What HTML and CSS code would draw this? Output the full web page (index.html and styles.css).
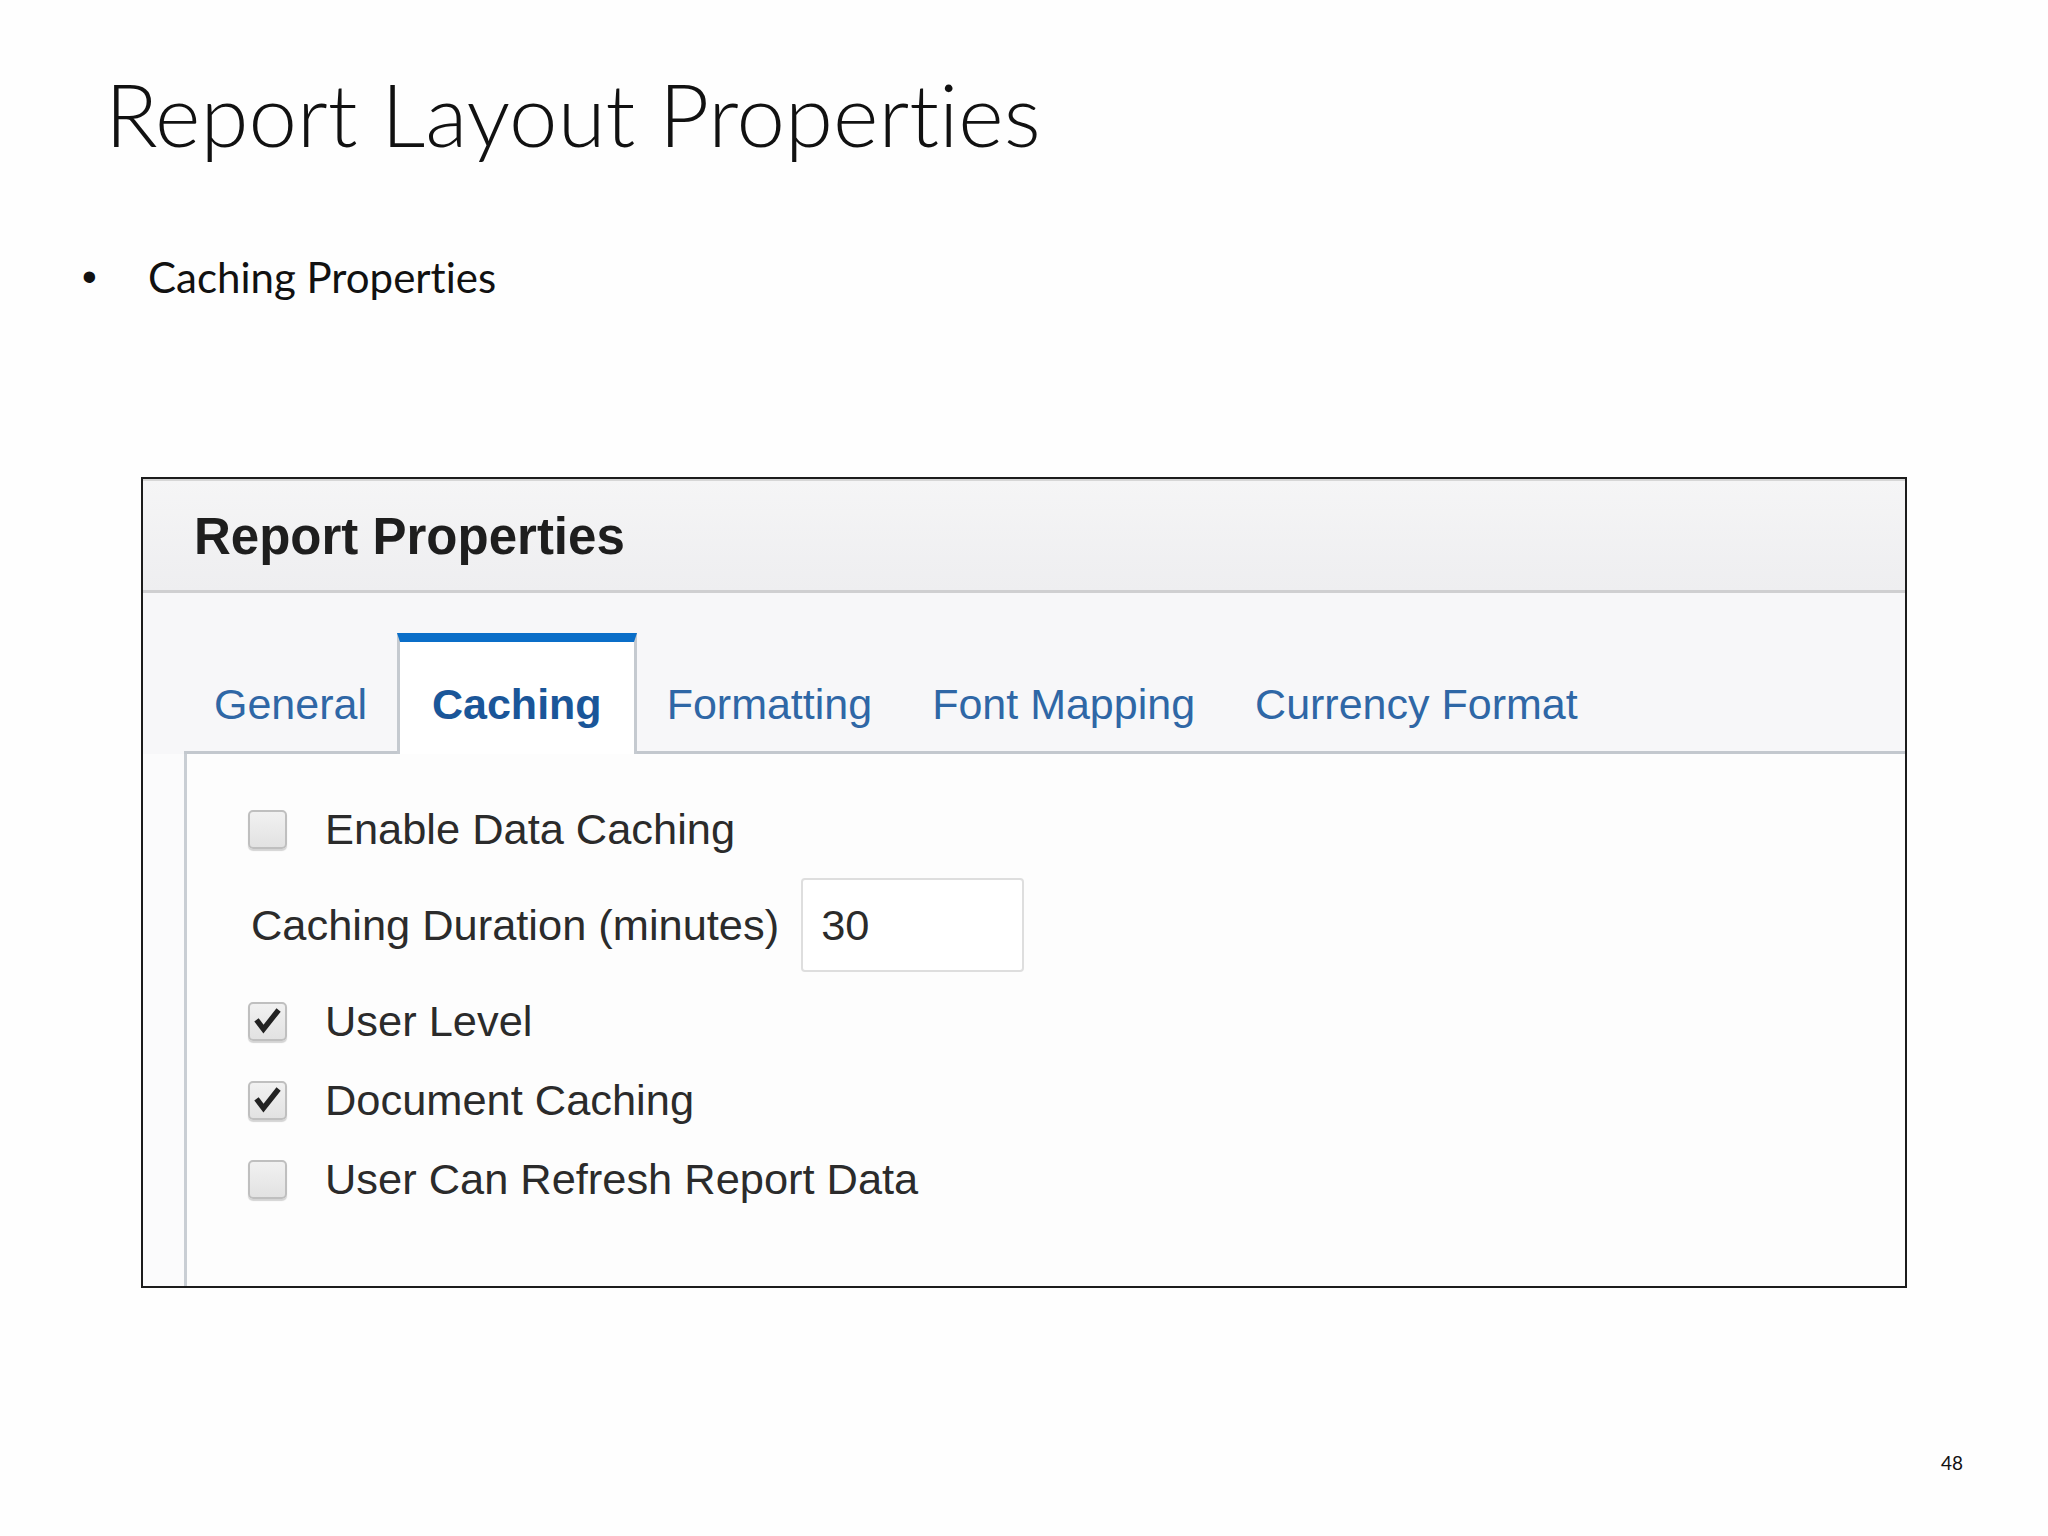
FILE: index.html
```html
<!DOCTYPE html>
<html>
<head>
<meta charset="utf-8">
<link rel="stylesheet" href="styles.css">
</head>
<body>
<div class="slide">
  <h1 class="title">Report Layout Properties</h1>
  <ul class="bullets">
    <li><span class="dot">•</span><span>Caching Properties</span></li>
  </ul>
  <div class="panel">
    <div class="panel-head">Report Properties</div>
    <div class="tabarea">
      <div class="tabs">
        <div class="tab">General</div>
        <div class="tab active">Caching</div>
        <div class="tab">Formatting</div>
        <div class="tab">Font Mapping</div>
        <div class="tab">Currency Format</div>
      </div>
    </div>
    <div class="lower">
      <div class="content">
        <div class="row">
          <span class="cb"></span><span class="label">Enable Data Caching</span>
        </div>
        <div class="row field">
          <span class="label">Caching Duration (minutes)</span>
          <span class="input">30</span>
        </div>
        <div class="row">
          <span class="cb"><svg viewBox="0 0 39 39"><path d="M9 20 L15 28 L30 9" /></svg></span><span class="label">User Level</span>
        </div>
        <div class="row">
          <span class="cb"><svg viewBox="0 0 39 39"><path d="M9 20 L15 28 L30 9" /></svg></span><span class="label">Document Caching</span>
        </div>
        <div class="row">
          <span class="cb"></span><span class="label">User Can Refresh Report Data</span>
        </div>
      </div>
    </div>
  </div>
  <div class="footer">48</div>
</div>
</body>
</html>
```

FILE: styles.css
```css
html, body {
  margin: 0;
  padding: 0;
  background: #ffffff;
}
.slide {
  width: 2048px;
  height: 1536px;
  display: flex;
  flex-direction: column;
  background: #fefefe;
  font-family: Lato, "Open Sans", sans-serif;
  font-variant-ligatures: none;
  color: #000;
}
.title {
  margin: 0;
  padding: 64px 0 0 105px;
  font-family: Lato, "Open Sans", sans-serif;
  font-weight: 300;
  font-size: 87px;
  line-height: 100px;
  color: #111;
}
.bullets {
  list-style: none;
  margin: 88px 0 0 0;
  padding: 0 0 0 82px;
  font-size: 42px;
  line-height: 50px;
  color: #111;
}
.bullets li {
  display: flex;
}
.dot {
  width: 66px;
  font-family: "Liberation Sans", sans-serif;
  font-size: 42px;
}
.panel {
  margin: 175px 0 0 141px;
  width: 1766px;
  height: 811px;
  box-sizing: border-box;
  border: 2px solid #1c1c1c;
  box-shadow: inset 5px 0 0 #c9cdd3;
  display: flex;
  flex-direction: column;
  font-family: "Liberation Sans", Arial, sans-serif;
  background: #fdfdfd;
}
.panel-head {
  height: 114px;
  box-sizing: border-box;
  padding: 26px 0 0 51px;
  font-weight: bold;
  font-size: 51px;
  line-height: 60px;
  color: #1e1e1e;
  background: linear-gradient(#f5f5f6, #eeeef0);
  border-top: 2px solid #d6d6d6;
  border-bottom: 3px solid #cfcfd1;
}
.tabarea {
  height: 161px;
  box-sizing: border-box;
  background: #f7f7f9;
  padding-left: 41px;
  display: flex;
  align-items: flex-end;
}
.tabs {
  flex: 1;
  display: flex;
  align-items: flex-end;
  border-bottom: 3px solid #c3c8ce;
}
.tab {
  padding: 0 30px 22px;
  font-size: 43px;
  line-height: 50px;
  color: #2f67a6;
  white-space: nowrap;
}
.tab.active {
  background: #ffffff;
  border: 3px solid #c5cad0;
  border-top: 9px solid #0a6ec8;
  border-bottom: none;
  padding: 37px 32px 25px;
  margin-bottom: -3px;
  font-weight: bold;
  color: #1a5699;
}
.lower {
  flex: 1;
  display: flex;
  padding-left: 41px;
  background: #fbfbfc;
}
.content {
  flex: 1;
  border-left: 3px solid #c9ced4;
  background: #fdfdfd;
  padding: 45px 0 0 61px;
  display: flex;
  flex-direction: column;
  gap: 19px;
}
.row {
  display: flex;
  align-items: center;
  height: 60px;
  font-size: 43.4px;
  line-height: 50px;
  color: #2b2b2b;
}
.row.field {
  height: 94px;
  padding-left: 3px;
}
.cb {
  width: 39px;
  height: 39px;
  box-sizing: border-box;
  border: 2px solid #bfbfbf;
  border-radius: 5px;
  background: linear-gradient(#f1f1f1, #e2e2e2);
  box-shadow: 0 2px 1px #d4d4d4;
  margin-right: 38px;
  display: flex;
}
.cb svg {
  width: 35px;
  height: 35px;
}
.cb path {
  fill: none;
  stroke: #222222;
  stroke-width: 6;
  stroke-linecap: square;
  stroke-linejoin: miter;
}
.input {
  margin-left: 22px;
  width: 223px;
  height: 94px;
  box-sizing: border-box;
  border: 2px solid #dedede;
  border-radius: 4px;
  background: #ffffff;
  padding-left: 18px;
  display: flex;
  align-items: center;
}
.footer {
  margin-top: auto;
  padding: 0 85px 61px 0;
  text-align: right;
  font-size: 19px;
  line-height: 24px;
  color: #111;
}
```
